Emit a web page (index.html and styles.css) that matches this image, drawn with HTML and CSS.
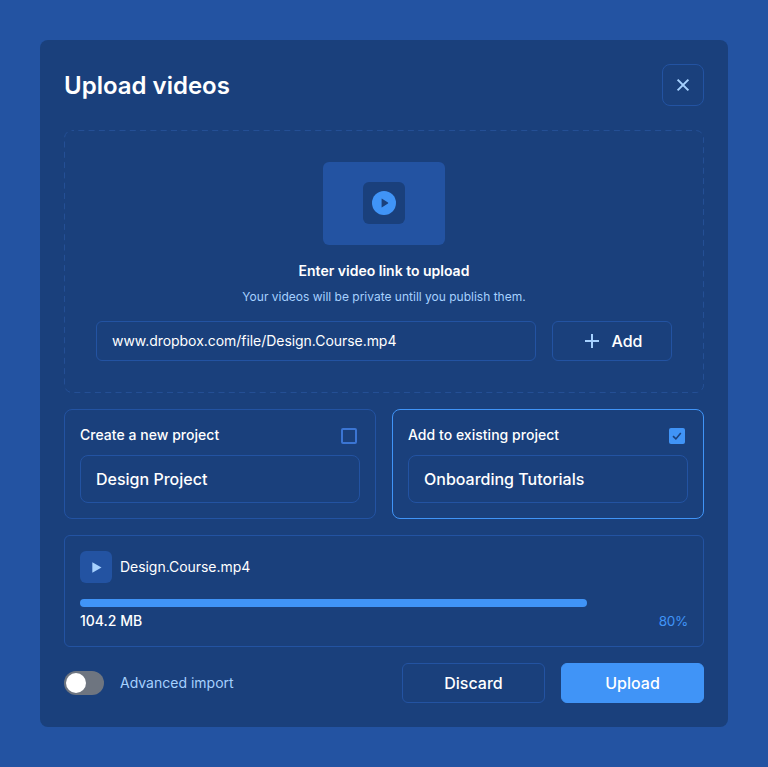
FILE: index.html
```html
<!DOCTYPE html>
<html lang="en">
<head>
<meta charset="utf-8">
<title>Upload videos</title>
<link rel="stylesheet" href="styles.css">
</head>
<body>
<main class="modal">
  <header class="modal-header">
    <h1 class="modal-title">Upload videos</h1>
    <button class="close" aria-label="Close">
      <svg width="14" height="14" viewBox="0 0 14 14" fill="none" stroke="currentColor" stroke-width="2"><path d="M1.6 1.6 12.4 12.4M12.4 1.6 1.6 12.4"/></svg>
    </button>
  </header>

  <section class="dropzone">
    <svg class="dropzone-outline" width="640" height="263"><rect x="0.5" y="0.5" width="639" height="262" rx="7.5"/></svg>
    <div class="thumb">
      <div class="thumb-icon">
        <svg width="24" height="24" viewBox="0 0 24 24"><circle cx="12" cy="12" r="12" fill="#4094f7"/><path d="M9.6 7.9v8.2q0 .6.5.2L16 12.4q.5-.4 0-.8L10.1 7.7q-.5-.4-.5.2z" fill="#1a407c"/></svg>
      </div>
    </div>
    <h2 class="drop-title">Enter video link to upload</h2>
    <p class="drop-note">Your videos will be private untill you publish them.</p>
    <div class="link-row">
      <div class="link-field">www.dropbox.com/file/Design.Course.mp4</div>
      <button class="btn add">
        <svg width="14" height="14" viewBox="0 0 14 14" fill="none" stroke="#a6d1ff" stroke-width="2"><path d="M7 0v14M0 7h14"/></svg>
        <span>Add</span>
      </button>
    </div>
  </section>

  <section class="projects">
    <div class="project">
      <div class="project-head">
        <span class="project-label">Create a new project</span>
        <span class="checkbox"></span>
      </div>
      <div class="project-field">Design Project</div>
    </div>
    <div class="project selected">
      <div class="project-head">
        <span class="project-label">Add to existing project</span>
        <span class="checkbox checked"><svg width="16" height="16" viewBox="0 0 16 16" fill="none" stroke="#1a407c" stroke-width="1.6"><path d="M4 8.1 6.9 10.9 11.8 5"/></svg></span>
      </div>
      <div class="project-field">Onboarding Tutorials</div>
    </div>
  </section>

  <section class="file">
    <div class="file-head">
      <div class="file-icon"><svg width="10" height="11" viewBox="0 0 10 11"><path d="M0.3 0.3v10.4L9.5 5.5z" fill="#a6d1ff"/></svg></div>
      <span class="file-name">Design.Course.mp4</span>
    </div>
    <div class="progress"></div>
    <div class="file-meta">
      <span class="file-size">104.2 MB</span>
      <span class="file-percent">80%</span>
    </div>
  </section>

  <footer class="modal-footer">
    <span class="toggle"></span>
    <span class="toggle-label">Advanced import</span>
    <button class="btn discard">Discard</button>
    <button class="btn upload">Upload</button>
  </footer>
</main>
</body>
</html>
```
FILE: styles.css
```css
* {
  box-sizing: border-box;
  margin: 0;
}

body {
  height: 767px;
  padding: 40px;
  background: #2353a2;
  color: #fff;
  font-family: Inter, "Liberation Sans", sans-serif;
  font-size: 14px;
  line-height: 20px;
}

button {
  padding: 0;
  background: none;
  color: inherit;
  font: inherit;
}

svg {
  display: block;
  flex: none;
}

.modal {
  display: flex;
  flex-direction: column;
  gap: 16px;
  width: 688px;
  height: 687px;
  padding: 24px;
  border-radius: 8px;
  background: #1a407c;
}

.modal-header {
  display: flex;
  align-items: center;
  justify-content: space-between;
  height: 42px;
  margin-bottom: 8px;
}

.modal-title {
  padding-top: 2px;
  font-size: 24px;
  font-weight: 600;
  line-height: 32px;
}

.close {
  display: flex;
  align-items: center;
  justify-content: center;
  width: 42px;
  height: 42px;
  border: 1px solid #2353a2;
  border-radius: 8px;
  color: #a6d1ff;
}

.dropzone {
  position: relative;
  display: flex;
  flex-direction: column;
  align-items: center;
  height: 263px;
  padding: 32px;
}

.dropzone-outline {
  position: absolute;
  top: 0;
  left: 0;
  fill: none;
  stroke: #244f95;
  stroke-dasharray: 6 4.3;
  stroke-dashoffset: 4;
}

.thumb {
  display: flex;
  align-items: center;
  justify-content: center;
  width: 122px;
  height: 83px;
  border-radius: 6px;
  background: #2353a2;
}

.thumb-icon {
  display: flex;
  align-items: center;
  justify-content: center;
  width: 42px;
  height: 42px;
  margin-bottom: 0.6px;
  border-radius: 6px;
  background: #1a407c;
}

.drop-title {
  margin-top: 16px;
  font-size: 14px;
  font-weight: 600;
}

.drop-note {
  margin: 6px 0 14px;
  color: #a6d1ff;
  font-size: 12px;
}

.link-row {
  display: flex;
  gap: 16px;
  width: 100%;
}

.link-field {
  flex: 1;
  height: 40px;
  padding: 9px 15px;
  border: 1px solid #2353a2;
  border-radius: 6px;
  letter-spacing: -0.045px;
}

.btn {
  display: flex;
  align-items: center;
  justify-content: center;
  width: 143px;
  height: 40px;
  border: 1px solid #2353a2;
  border-radius: 6px;
  font-size: 16px;
  font-weight: 500;
}

.add {
  gap: 13px;
  width: 120px;
  padding-left: 3px;
}

.projects {
  display: grid;
  grid-template-columns: 1fr 1fr;
  gap: 16px;
}

.project {
  height: 110px;
  padding: 15px;
  border: 1px solid #2353a2;
  border-radius: 8px;
}

.project.selected {
  border-color: #4094f7;
}

.project-head {
  display: flex;
  align-items: center;
  justify-content: space-between;
  height: 20px;
  margin-bottom: 10px;
  padding-right: 3px;
}

.project-label {
  font-weight: 500;
  letter-spacing: 0.03px;
}

.checkbox {
  width: 16px;
  height: 16px;
  margin-top: 2px;
  border: 2px solid #3b75d3;
  border-radius: 2px;
}

.checkbox.checked {
  border: 0;
  background: #4094f7;
}

.project-field {
  height: 48px;
  padding: 13px 15px;
  border: 1px solid #2353a2;
  border-radius: 8px;
  font-size: 16px;
  font-weight: 500;
}

.file {
  height: 112px;
  padding: 15px;
  border: 1px solid #2353a2;
  border-radius: 6px;
}

.file-head {
  display: flex;
  align-items: center;
  gap: 8px;
}

.file-icon {
  display: flex;
  align-items: center;
  justify-content: center;
  width: 32px;
  height: 32px;
  padding-left: 1px;
  border-radius: 6px;
  background: #2353a2;
}

.file-name {
  letter-spacing: -0.045px;
}

.progress {
  width: 507px;
  height: 8px;
  margin: 16px 0 4px;
  border-radius: 4px;
  background: #4094f7;
}

.file-meta {
  display: flex;
  justify-content: space-between;
}

.file-size {
  font-weight: 500;
}

.file-percent {
  color: #4094f7;
  font-size: 13.5px;
  letter-spacing: -0.3px;
}

.modal-footer {
  display: flex;
  align-items: center;
  gap: 16px;
}

.toggle {
  width: 40px;
  height: 24px;
  padding: 2px;
  border-radius: 12px;
  background: #6e7580;
}

.toggle::before {
  content: "";
  display: block;
  width: 20px;
  height: 20px;
  border-radius: 50%;
  background: #fff;
}

.toggle-label {
  margin-right: auto;
  color: #a6d1ff;
}

.upload {
  border-color: #4094f7;
  background: #4094f7;
}
```
